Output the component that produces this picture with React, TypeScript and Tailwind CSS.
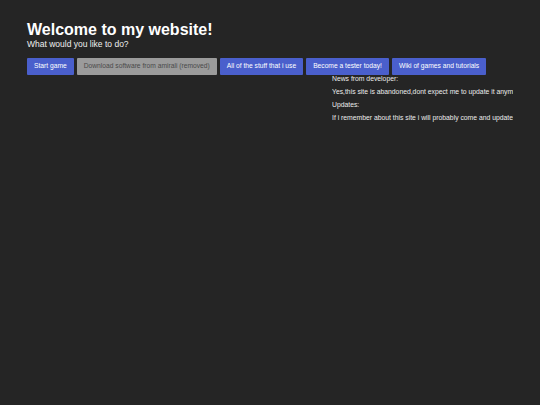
const buttons = [
  { label: 'Start game', disabled: false },
  { label: 'Download software from amirali (removed)', disabled: true },
  { label: 'All of the stuff that i use', disabled: false },
  { label: 'Become a tester today!', disabled: false },
  { label: 'Wiki of games and tutorials', disabled: false },
];

const news = [
  'News from developer:',
  'Yes,this site is abandoned,dont expect me to update it anymore',
  'Updates:',
  'If i remember about this site i will probably come and update',
];

export default function App() {
  return (
    <div
      className="min-h-[405px] w-[540px] bg-[#252525] px-[27px] pt-[21px] text-white"
      style={{ fontFamily: '"Liberation Sans", Arial, sans-serif' }}
    >
      {/* Header */}
      <h1 className="text-[16px] font-bold leading-[18px]">Welcome to my website!</h1>
      <p className="text-[8.5px] leading-[10px] text-[#f0f0f0]">What would you like to do?</p>

      {/* Action buttons */}
      <div className="mt-[9px] flex gap-[3px]">
        {buttons.map((b) => (
          <button
            key={b.label}
            className={
              b.disabled
                ? 'h-[17px] rounded-[1px] bg-[#9b9b9b] px-[7px] text-[6.7px] text-[#4a4a4a]'
                : 'h-[17px] rounded-[1px] bg-[#4a5fcc] px-[7px] text-[6.7px] text-white'
            }
          >
            {b.label}
          </button>
        ))}
      </div>

      {/* News */}
      <div className="-mt-[3.5px] flex justify-end">
        <div className="w-[181px] overflow-hidden">
          {news.map((line) => (
            <p
              key={line}
              className="whitespace-nowrap text-[6.8px] leading-[13.3px] text-[#ececec]"
            >
              {line}
            </p>
          ))}
        </div>
      </div>
    </div>
  );
}
